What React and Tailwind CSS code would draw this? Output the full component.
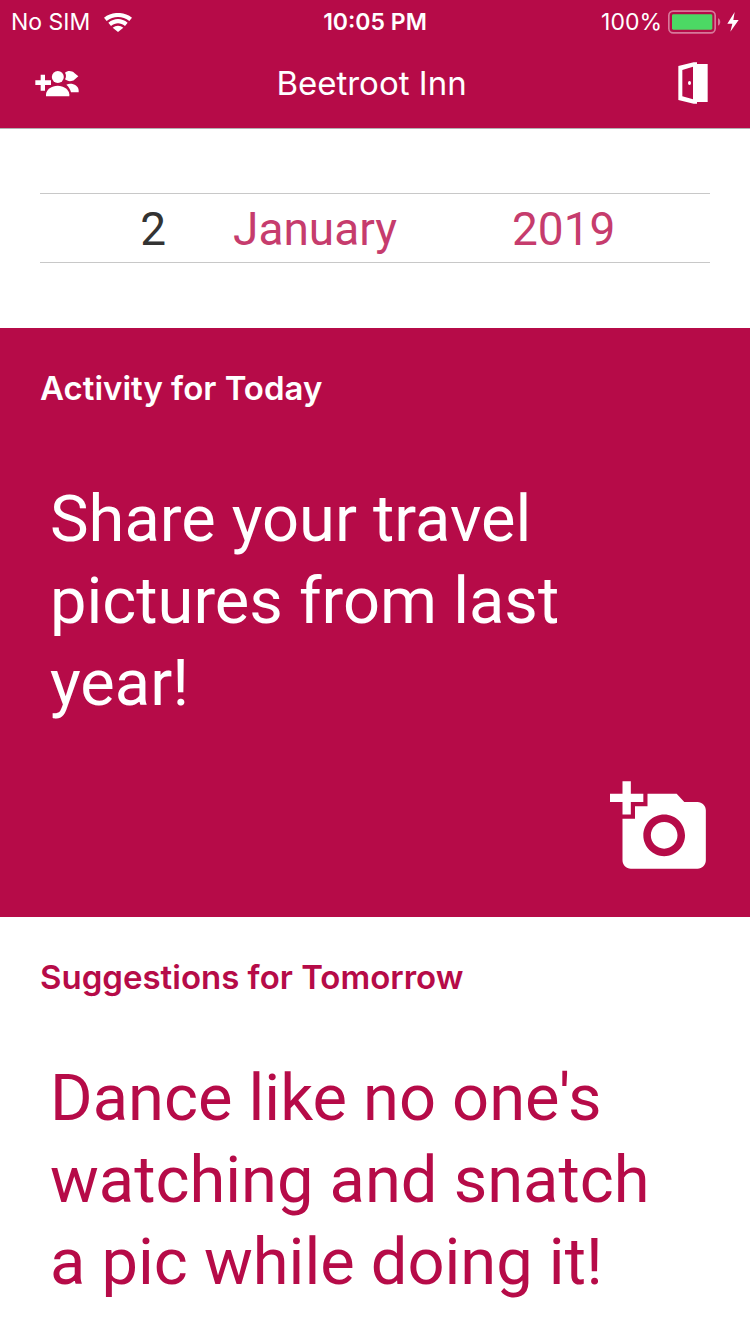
import React from "react";

function WifiIcon() {
  return (
    <svg className="h-[19px] w-[28px]" viewBox="0 0 84 57" fill="#fff" aria-hidden="true">
      <path d="M0 14C24-5 60-5 84 14l-8 10C56 8 28 8 8 24z" />
      <path d="M13 29C31 14 53 14 71 29l-8 10C49 28 35 28 21 39z" />
      <path d="M26 44c10-8 22-8 32 0L42 57z" />
    </svg>
  );
}

function BatteryIcon() {
  return (
    <svg className="h-[24px] w-[53px]" viewBox="0 0 159 72" aria-hidden="true">
      <rect x="2.5" y="3.5" width="139" height="65" rx="13" fill="none" stroke="#fff" strokeOpacity=".45" strokeWidth="5" />
      <rect x="12" y="13" width="121" height="46" rx="4" fill="#4cd964" />
      <path d="M150 25c9 3 9 19 0 22z" fill="#fff" fillOpacity=".45" />
    </svg>
  );
}

function BoltIcon() {
  return (
    <svg className="h-[20px] w-[12px]" viewBox="0 0 36 60" aria-hidden="true">
      <path d="M23 0L1 35h15L10 59l25-35H19z" fill="#fff" />
    </svg>
  );
}

function AddPeopleIcon() {
  return (
    <svg className="h-[27px] w-[44px]" viewBox="45 43 132 81" fill="#fff" aria-hidden="true">
      <path d="M62 57h13v17h18v14H75v17H62V88H46V74h16z" />
      <circle cx="113.5" cy="64" r="18" />
      <path d="M135 51c8-7 21-6 28 1l12 10-12 10c-7 6-20 6-28-1 4-7 4-14 0-20z" />
      <path d="M78 122v-6c1-15 17-26 35-26s34 11 35 26v6z" />
      <path d="M139 87c16-7 36 2 37 17v6h-23c-2-9-7-17-14-23z" />
    </svg>
  );
}

function DoorIcon() {
  return (
    <svg className="h-[42px] w-[30px]" viewBox="54 36 90 126" fill="#fff" aria-hidden="true">
      <path fillRule="evenodd" d="M55 48L101 37h10v5h32v114h-32v5h-10L55 150zM67 60v79l32 9V50z" />
      <ellipse cx="88.5" cy="99" rx="4.5" ry="6" />
    </svg>
  );
}

function AddPhotoIcon() {
  return (
    <svg className="size-[100px]" viewBox="0 0 24 24" fill="#fff" aria-hidden="true">
      <path d="M3 4V1h2v3h3v2H5v3H3V6H0V4h3zm3 6V7h3V4h7l1.83 2H21c1.1 0 2 .9 2 2v12c0 1.1-.9 2-2 2H5c-1.1 0-2-.9-2-2V10h3zm7 9c2.76 0 5-2.24 5-5s-2.24-5-5-5-5 2.24-5 5 2.24 5 5 5zm-3.2-5c0 1.77 1.43 3.2 3.2 3.2s3.2-1.43 3.2-3.2-1.43-3.2-3.2-3.2-3.2 1.43-3.2 3.2z" />
    </svg>
  );
}

const months = ["January", "February", "March", "April", "May", "June", "July", "August", "September", "October", "November", "December"];
const days = Array.from({ length: 31 }, (_, i) => String(i + 1));
const years = ["2018", "2019", "2020"];

function Picker({ label, options, value, className }) {
  return (
    <select aria-label={label} defaultValue={value} className={`w-full appearance-none bg-transparent outline-none ${className}`}>
      {options.map((o) => (
        <option key={o}>{o}</option>
      ))}
    </select>
  );
}

export default function App() {
  return (
    <div className="min-h-screen bg-white font-['Inter','Liberation_Sans',sans-serif] text-white">
      <header className="border-b border-[#b2b2b2] bg-[#b60b48]">
        <div className="grid h-11 grid-cols-[1fr_auto_1fr] items-center px-[11px] text-[23px] leading-6">
          <div className="flex items-center gap-[14px]">
            <span>No SIM</span>
            <WifiIcon />
          </div>
          <span className="font-semibold">10:05 PM</span>
          <div className="flex items-center justify-end gap-[6px]">
            <span>100%</span>
            <BatteryIcon />
            <BoltIcon />
          </div>
        </div>
        <nav className="grid h-[84px] grid-cols-[1fr_auto_1fr] items-center pr-[42px] pb-[6px] pl-[35px]">
          <button type="button" aria-label="Add people" className="justify-self-start">
            <AddPeopleIcon />
          </button>
          <h1 className="text-[33px] leading-10">Beetroot Inn</h1>
          <button type="button" aria-label="Leave" className="justify-self-end">
            <DoorIcon />
          </button>
        </nav>
      </header>
      <main>
        <section className="px-10 pt-16 pb-[65px]">
          <div className="grid h-[70px] grid-cols-[160fr_279fr_231fr] items-center border-y border-[#c8c8c8] pt-[2px] font-['Roboto','Liberation_Sans',sans-serif] text-[46px] leading-[56px] text-[#c63c6d]">
            <Picker label="Day" options={days} value="2" className="pr-[34px] text-right text-[#333333]" />
            <Picker label="Month" options={months} value="January" className="pl-[33px]" />
            <Picker label="Year" options={years} value="2019" className="pl-[33px]" />
          </div>
        </section>
        <section className="bg-[#b60b48] px-10 py-10">
          <h2 className="text-[33px] leading-10 font-semibold">Activity for Today</h2>
          <p className="mt-[70px] px-[10px] font-['Roboto','Liberation_Sans',sans-serif] text-[65px] leading-[82px]">Share your travel pictures from last year!</p>
          <div className="mt-[53px] flex justify-end">
            <button type="button" aria-label="Add photo">
              <AddPhotoIcon />
            </button>
          </div>
        </section>
        <section className="px-10 pt-10 text-[#b60b48]">
          <h2 className="text-[33px] leading-10 font-semibold">Suggestions for Tomorrow</h2>
          <p className="mt-[60px] px-[10px] font-['Roboto','Liberation_Sans',sans-serif] text-[65px] leading-[82px]">Dance like no one's watching and snatch a pic while doing it!</p>
        </section>
      </main>
    </div>
  );
}
